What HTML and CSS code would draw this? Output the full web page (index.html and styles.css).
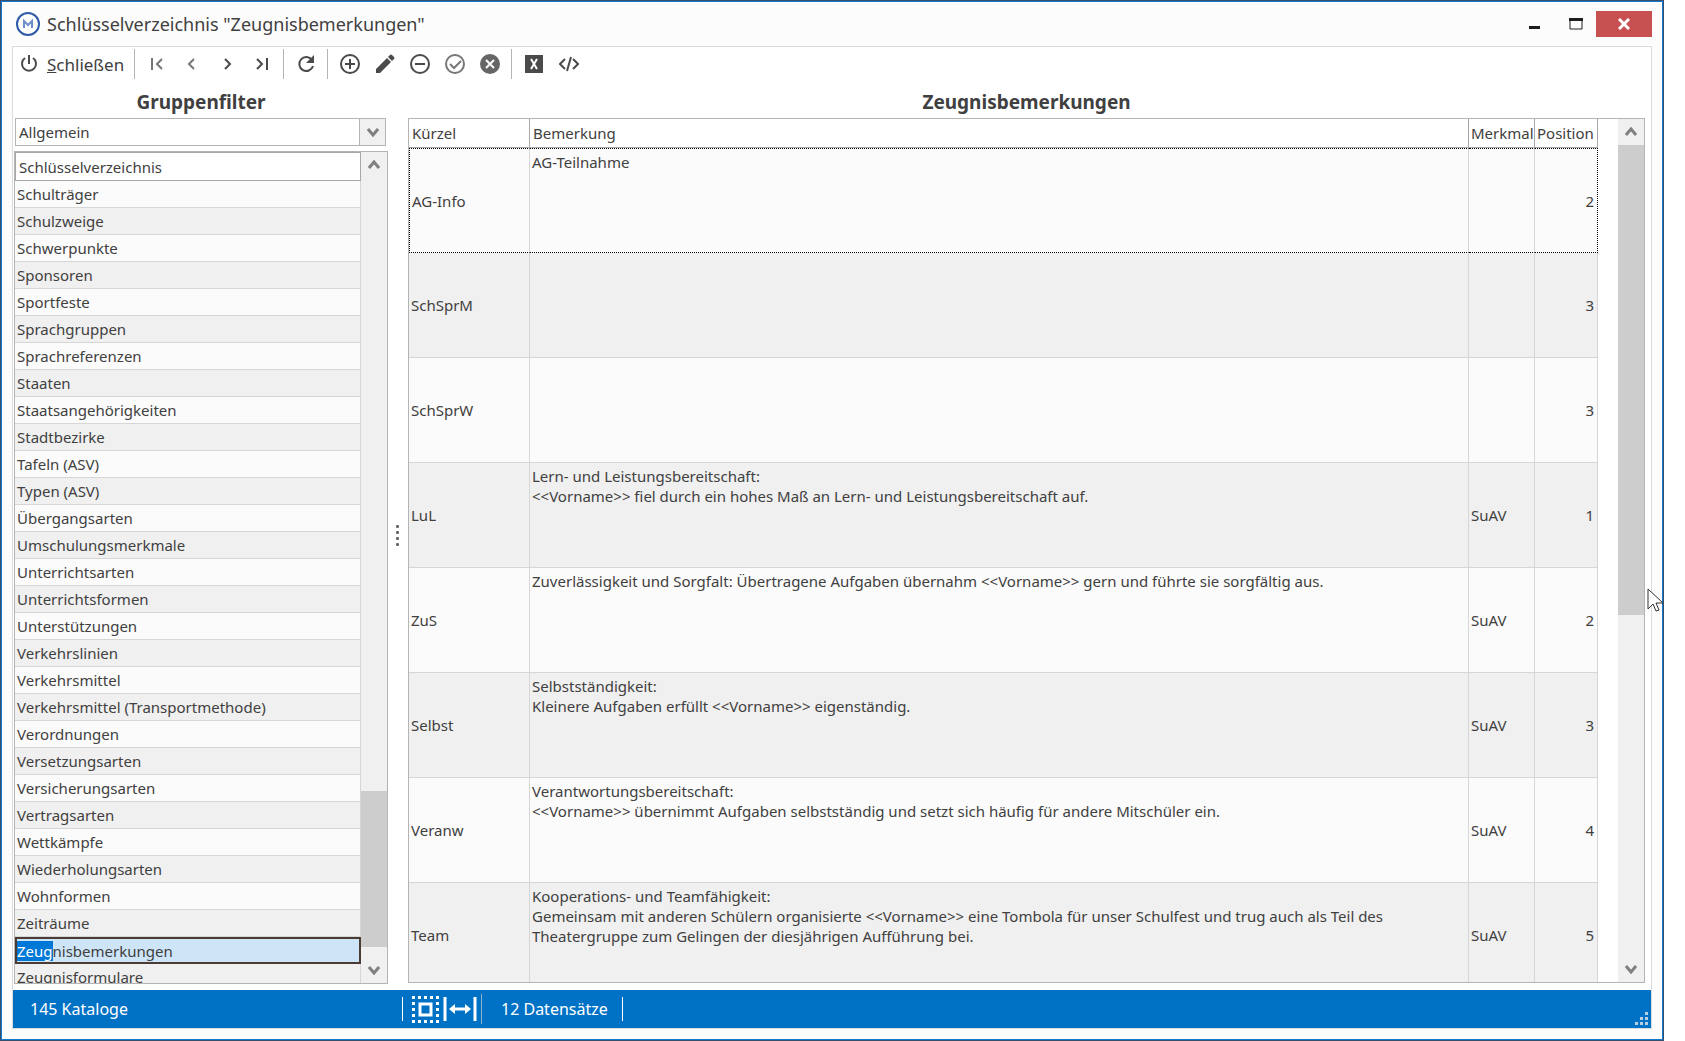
FILE: index.html
```html
<!DOCTYPE html>
<html lang="de">
<head>
<meta charset="utf-8">
<title>Schlüsselverzeichnis "Zeugnisbemerkungen"</title>
<link rel="stylesheet" href="styles.css">
</head>
<body>
<div class="window">

  <header class="titlebar">
    <svg class="logo" width="26" height="26" viewBox="0 0 26 26">
      <circle cx="13" cy="13" r="11" fill="#fff" stroke="#2f5aa8" stroke-width="2"/>
      <path d="M9 17v-7l4 4 4-4v7" fill="none" stroke="#6f8fc8" stroke-width="2"/>
    </svg>
    <h1>Schlüsselverzeichnis "Zeugnisbemerkungen"</h1>
    <button class="win-btn" type="button" aria-label="Minimieren"><svg width="13" height="13"><rect x="1" y="8" width="11" height="3" fill="#1e1e1e"/></svg></button>
    <button class="win-btn" type="button" aria-label="Maximieren"><svg width="14" height="12"><path d="M1 1h12v10H1z" fill="none" stroke="#1e1e1e" stroke-width="1"/><path d="M0 0h14v3H0z" fill="#1e1e1e"/></svg></button>
    <button class="win-btn close" type="button" aria-label="Schließen"><svg width="12" height="12"><path d="M1 1l10 10M11 1L1 11" stroke="#fff" stroke-width="3"/></svg></button>
  </header>

  <main class="frame">
    <nav class="toolbar">
      <button class="tool text" type="button"><svg class="icon" viewBox="0 0 20 20"><path d="M10 1v9M6 4a7 7 0 1 0 8 0"/></svg><span><u>S</u>chließen</span></button>
      <i class="sep"></i>
      <button class="tool soft" type="button" aria-label="Erster"><svg class="icon" viewBox="0 0 20 20"><path d="M5 4v12M15 5l-5 5 5 5"/></svg></button>
      <button class="tool soft" type="button" aria-label="Zurück"><svg class="icon" viewBox="0 0 20 20"><path d="M12 5l-5 5 5 5"/></svg></button>
      <button class="tool" type="button" aria-label="Weiter"><svg class="icon" viewBox="0 0 20 20"><path d="M8 5l5 5-5 5"/></svg></button>
      <button class="tool" type="button" aria-label="Letzter"><svg class="icon" viewBox="0 0 20 20"><path d="M15 4v12M5 5l5 5-5 5"/></svg></button>
      <i class="sep"></i>
      <button class="tool" type="button" aria-label="Aktualisieren"><svg class="icon" viewBox="0 0 20 20"><path d="M16 6a7 7 0 1 0 1 6"/><path class="solid" d="M18 1v8h-8z"/></svg></button>
      <i class="sep"></i>
      <button class="tool" type="button" aria-label="Neu"><svg class="icon" viewBox="0 0 20 20"><circle cx="10" cy="10" r="9"/><path d="M10 5v10M5 10h10"/></svg></button>
      <button class="tool" type="button" aria-label="Bearbeiten"><svg class="icon" viewBox="0 0 20 20"><path class="solid" d="M1 19v-4L12 4l4 4L5 19zM13 3l2-2q1-1 2 0l2 2q1 1 0 2l-2 2z"/></svg></button>
      <button class="tool" type="button" aria-label="Löschen"><svg class="icon" viewBox="0 0 20 20"><circle cx="10" cy="10" r="9"/><path d="M5 10h10"/></svg></button>
      <button class="tool soft" type="button" aria-label="Speichern"><svg class="icon" viewBox="0 0 20 20"><circle cx="10" cy="10" r="9"/><path d="M5 10l4 4 7-7"/></svg></button>
      <button class="tool" type="button" aria-label="Abbrechen"><svg class="icon" viewBox="0 0 20 20"><circle class="dim" cx="10" cy="10" r="10"/><path class="white" d="M6 6l8 8M14 6l-8 8"/></svg></button>
      <i class="sep"></i>
      <button class="tool" type="button" aria-label="Excel"><svg class="icon" viewBox="0 0 20 20"><path class="solid" d="M1 1h18v18H1z"/><path class="white" d="M7 5l6 10M13 5L7 15"/></svg></button>
      <button class="tool" type="button" aria-label="XML"><svg class="icon" viewBox="0 0 20 20"><path d="M6 5l-5 5 5 5M14 5l5 5-5 5M12 3L8 17"/></svg></button>
    </nav>

    <div class="panes">
      <section class="left">
        <h2>Gruppenfilter</h2>
        <div class="combo">
          <select aria-label="Gruppenfilter"><option>Allgemein</option></select>
          <svg class="arrow" viewBox="0 0 12 10"><path d="M1 2l5 6 5-6"/></svg>
        </div>
        <div class="list">
          <div class="scroll">
            <table class="keys">
              <thead><tr><th>Schlüsselverzeichnis</th></tr></thead>
              <tbody>
                <tr><td>Schulträger</td></tr>
                <tr><td>Schulzweige</td></tr>
                <tr><td>Schwerpunkte</td></tr>
                <tr><td>Sponsoren</td></tr>
                <tr><td>Sportfeste</td></tr>
                <tr><td>Sprachgruppen</td></tr>
                <tr><td>Sprachreferenzen</td></tr>
                <tr><td>Staaten</td></tr>
                <tr><td>Staatsangehörigkeiten</td></tr>
                <tr><td>Stadtbezirke</td></tr>
                <tr><td>Tafeln (ASV)</td></tr>
                <tr><td>Typen (ASV)</td></tr>
                <tr><td>Übergangsarten</td></tr>
                <tr><td>Umschulungsmerkmale</td></tr>
                <tr><td>Unterrichtsarten</td></tr>
                <tr><td>Unterrichtsformen</td></tr>
                <tr><td>Unterstützungen</td></tr>
                <tr><td>Verkehrslinien</td></tr>
                <tr><td>Verkehrsmittel</td></tr>
                <tr><td>Verkehrsmittel (Transportmethode)</td></tr>
                <tr><td>Verordnungen</td></tr>
                <tr><td>Versetzungsarten</td></tr>
                <tr><td>Versicherungsarten</td></tr>
                <tr><td>Vertragsarten</td></tr>
                <tr><td>Wettkämpfe</td></tr>
                <tr><td>Wiederholungsarten</td></tr>
                <tr><td>Wohnformen</td></tr>
                <tr><td>Zeiträume</td></tr>
                <tr class="selected"><td><mark>Zeug</mark>nisbemerkungen</td></tr>
                <tr><td>Zeugnisformulare</td></tr>
              </tbody>
            </table>
          </div>
          <div class="scrollbar">
            <svg class="arrow" viewBox="0 0 12 10"><path d="M1 8l5-6 5 6"/></svg>
            <div class="track"><div class="before"></div><div class="thumb"></div><div class="after"></div></div>
            <svg class="arrow" viewBox="0 0 12 10"><path d="M1 2l5 6 5-6"/></svg>
          </div>
        </div>
      </section>

      <div class="splitter"><i></i><i></i><i></i><i></i></div>

      <section class="right">
        <h2>Zeugnisbemerkungen</h2>
        <div class="grid">
          <div class="scroll">
            <table class="remarks">
              <thead>
                <tr><th class="short">Kürzel</th><th>Bemerkung</th><th class="mark">Merkmal</th><th class="pos">Position</th></tr>
              </thead>
              <tbody>
                <tr class="focus"><td>AG-Info</td><td class="memo">AG-Teilnahme</td><td></td><td class="num">2</td></tr>
                <tr><td>SchSprM</td><td class="memo"></td><td></td><td class="num">3</td></tr>
                <tr><td>SchSprW</td><td class="memo"></td><td></td><td class="num">3</td></tr>
                <tr><td>LuL</td><td class="memo">Lern- und Leistungsbereitschaft:<br>&lt;&lt;Vorname&gt;&gt; fiel durch ein hohes Maß an Lern- und Leistungsbereitschaft auf.</td><td>SuAV</td><td class="num">1</td></tr>
                <tr><td>ZuS</td><td class="memo">Zuverlässigkeit und Sorgfalt: Übertragene Aufgaben übernahm &lt;&lt;Vorname&gt;&gt; gern und führte sie sorgfältig aus.</td><td>SuAV</td><td class="num">2</td></tr>
                <tr><td>Selbst</td><td class="memo">Selbstständigkeit:<br>Kleinere Aufgaben erfüllt &lt;&lt;Vorname&gt;&gt; eigenständig.</td><td>SuAV</td><td class="num">3</td></tr>
                <tr><td>Veranw</td><td class="memo">Verantwortungsbereitschaft:<br>&lt;&lt;Vorname&gt;&gt; übernimmt Aufgaben selbstständig und setzt sich häufig für andere Mitschüler ein.</td><td>SuAV</td><td class="num">4</td></tr>
                <tr><td>Team</td><td class="memo">Kooperations- und Teamfähigkeit:<br>Gemeinsam mit anderen Schülern organisierte &lt;&lt;Vorname&gt;&gt; eine Tombola für unser Schulfest und trug auch als Teil des<br>Theatergruppe zum Gelingen der diesjährigen Aufführung bei.</td><td>SuAV</td><td class="num">5</td></tr>
              </tbody>
            </table>
          </div>
          <div class="scrollbar">
            <svg class="arrow" viewBox="0 0 12 10"><path d="M1 8l5-6 5 6"/></svg>
            <div class="track"><div class="thumb"></div></div>
            <svg class="arrow" viewBox="0 0 12 10"><path d="M1 2l5 6 5-6"/></svg>
          </div>
        </div>
      </section>
    </div>

    <footer class="status">
      <span class="catalogs">145 Kataloge</span>
      <i class="bar"></i>
      <svg width="27" height="27" viewBox="0 0 27 27" fill="none" stroke="#fff">
        <path d="M0 1.500h27M0 25.500h27" stroke-width="3" stroke-dasharray="3 3"/>
        <path d="M1.500 6v15M25.500 6v15" stroke-width="3" stroke-dasharray="3 3"/>
        <path d="M8 8h11v11H8z" stroke-width="3"/>
      </svg>
      <svg width="34" height="26" viewBox="0 0 34 26" fill="none" stroke="#fff">
        <path d="M2 1v24M32 1v24" stroke-width="3"/>
        <path d="M9 13h16" stroke-width="3"/>
        <path d="M12 8v10l-6-5zM22 8v10l6-5z" fill="#fff" stroke="none"/>
      </svg>
      <i class="bar dim"></i>
      <span class="records">12 Datensätze</span>
      <i class="bar"></i>
      <svg class="grip" width="13" height="13" fill="#b9cfe4"><path d="M10 0h3v3h-3zM5 5h3v3H5zM10 5h3v3h-3zM0 10h3v3H0zM5 10h3v3H5zM10 10h3v3h-3z"/></svg>
    </footer>
  </main>

  <svg class="cursor" width="17" height="25" viewBox="0 0 17 25"><path d="M1 1v20l5-5 3 7 3-1-3-7h7z" fill="#fff" stroke="#333"/></svg>
</div>
</body>
</html>
```

FILE: styles.css
```css
* {
  box-sizing: border-box;
}
body {
  margin: 0;
  background: #fff;
  color: #404040;
  font-family: "Noto Sans", Tahoma, sans-serif;
  font-size: 15px;
}
button {
  border: 0;
  padding: 0;
  background: none;
  color: inherit;
  font: inherit;
}
.window {
  position: relative;
  display: flex;
  flex-direction: column;
  height: 100vh;
  margin-right: 21px;
  padding: 1px 11px 11px;
  border: 1px solid #34506e;
  background: #fcfcfc;
  box-shadow: inset 0 0 0 1px #1478cc;
}

/* title bar */
.titlebar {
  display: flex;
  align-items: center;
  height: 44px;
  flex: none;
}
.logo {
  margin: 0 6px 0 3px;
}
h1 {
  flex: 1;
  margin: 0;
  font-size: 18px;
  font-weight: normal;
}
.win-btn {
  display: flex;
  align-items: center;
  justify-content: center;
  width: 41px;
  height: 26px;
}
.win-btn.close {
  width: 56px;
  background: #c75050;
}

.frame {
  display: flex;
  flex: 1;
  flex-direction: column;
  min-height: 0;
  border: 1px solid #dcdcdc;
  background: #fff;
}

/* toolbar */
.toolbar {
  display: flex;
  flex: none;
  align-items: center;
  height: 34px;
  padding-left: 6px;
}
.tool {
  display: flex;
  align-items: center;
  justify-content: center;
  width: 35px;
  height: 30px;
}
.tool.text {
  gap: 8px;
  width: auto;
  margin-right: 6px;
  font-size: 17px;
}
.sep {
  width: 1px;
  height: 30px;
  margin: 0 4px;
  background: #b4b4b4;
}
.icon {
  width: 20px;
  height: 20px;
  fill: none;
  stroke: #4a4a4a;
  stroke-width: 2;
}
.icon .solid {
  fill: #4a4a4a;
  stroke: none;
}
.icon .dim {
  fill: #666;
  stroke: none;
}
.icon .white {
  stroke: #fff;
}
.soft .icon {
  stroke: #777;
}

.panes {
  display: flex;
  flex: 1;
  min-height: 0;
}
h2 {
  flex: none;
  height: 37px;
  margin: 0;
  font-size: 19px;
  line-height: 42px;
  text-align: center;
}
.left {
  display: flex;
  flex-direction: column;
  width: 375px;
  padding: 0 0 6px 1px;
}
.right {
  display: flex;
  flex: 1;
  flex-direction: column;
  min-width: 0;
  padding: 0 6px 7px 0;
}
.combo {
  position: relative;
  height: 28px;
  margin: 0 2px 5px 1px;
}
.combo select {
  width: 100%;
  height: 28px;
  padding: 0 3px;
  border: 1px solid #b4b4b4;
  border-radius: 0;
  appearance: none;
  background: linear-gradient(to right, #b4b4b4 1px, #f0f0f0 1px) right / 26px 100% no-repeat #fff;
  color: inherit;
  font: inherit;
}
.combo .arrow {
  position: absolute;
  top: 1px;
  right: 0;
}
.arrow {
  flex: none;
  width: 26px;
  height: 26px;
  padding: 8px 7px;
  fill: none;
  stroke: #808080;
  stroke-width: 3;
}
.list, .grid {
  display: flex;
  flex: 1;
  min-height: 0;
  border: 1px solid #b4b4b4;
}
.scroll {
  flex: 1;
  min-width: 0;
  overflow: hidden;
}
.scrollbar {
  display: flex;
  flex-direction: column;
  width: 26px;
  background: #f0f0f0;
}
.track {
  display: flex;
  flex: 1;
  flex-direction: column;
}
.list .before {
  flex: 612;
}
.list .thumb {
  flex: 156;
  background: #cdcdcd;
}
.list .after {
  flex: 10;
}
.grid .thumb {
  height: 58%;
  background: #cdcdcd;
}

/* tables */
table {
  width: 100%;
  border-collapse: separate;
  border-spacing: 0;
  table-layout: fixed;
}
th, td {
  padding: 0 2px;
  border: solid #d6d6d6;
  border-width: 0 1px 1px 0;
  line-height: 20px;
  text-align: left;
  white-space: nowrap;
}
th {
  height: 29px;
  padding: 0 3px;
  border-color: #a8a8a8;
  background: #fff;
  font-weight: normal;
}
tbody tr {
  background: #fbfbfb;
}
tbody tr:nth-child(even) {
  background: #f0f0f0;
}
.keys td {
  height: 27px;
}
.keys th {
  border-width: 1px;
}
.keys .selected td {
  padding: 0;
  border: 2px solid #4a3b35;
  background: #cde5f7;
}
mark {
  background: #0078d7;
  color: #fff;
}
.remarks {
  width: calc(100% - 20px);
}
.remarks td {
  height: 105px;
}
.remarks .short {
  width: 121px;
}
.remarks .mark {
  width: 66px;
  padding: 0 2px;
}
.remarks .pos {
  width: 63px;
  padding: 0 2px;
}
.remarks .memo {
  padding-top: 3px;
  vertical-align: top;
}
.remarks .num {
  padding-right: 3px;
  text-align: right;
}
.remarks .focus td {
  border-top: 1px dotted #000;
  border-bottom: 1px dotted #000;
}
.remarks .focus td:first-child {
  border-left: 1px dotted #000;
}
.remarks .focus td:last-child {
  border-right: 1px dotted #000;
}

.splitter {
  display: flex;
  flex-direction: column;
  align-items: center;
  justify-content: center;
  gap: 3px;
  width: 20px;
  padding-right: 2px;
}
.splitter i {
  width: 3px;
  height: 3px;
  border-radius: 1px;
  background: #666;
}

/* status bar */
.status {
  display: flex;
  flex: none;
  align-items: center;
  height: 38px;
  padding: 0 3px 0 17px;
  background: #0072c6;
  color: #fff;
  font-size: 16px;
}
.catalogs {
  width: 372px;
}
.bar {
  width: 1px;
  height: 24px;
  margin-right: 9px;
  background: #fff;
}
.status svg + svg {
  margin: 0 4px;
}
.bar.dim {
  height: 30px;
  margin-right: 19px;
  background: #8db0cc;
}
.records {
  margin-right: 14px;
}
.status .grip {
  align-self: flex-end;
  margin: 0 0 3px auto;
}
.cursor {
  position: absolute;
  top: 587px;
  right: -1px;
}
```
